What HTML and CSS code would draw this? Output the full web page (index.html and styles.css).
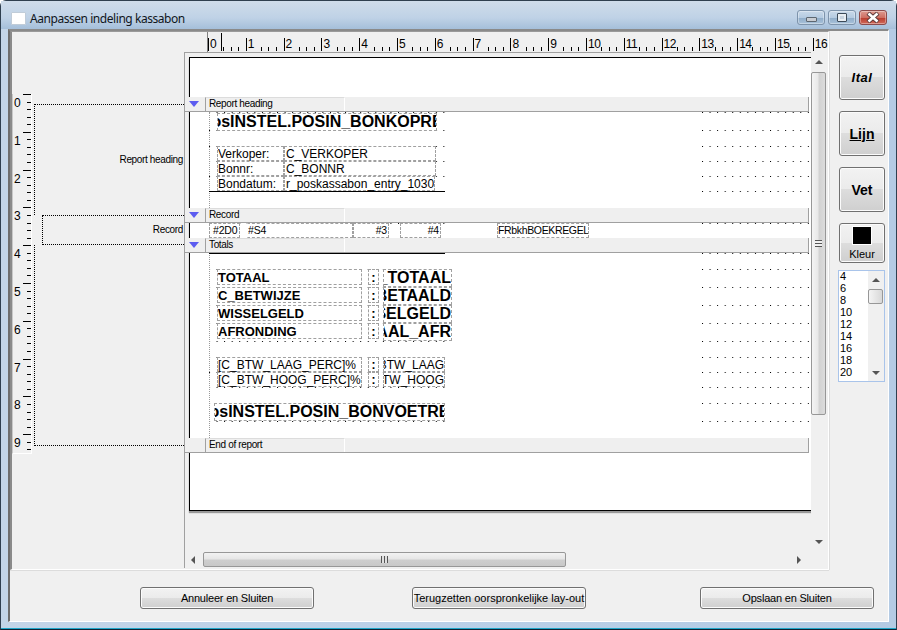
FILE: index.html
```html
<!DOCTYPE html>
<html lang="nl">
<head>
<meta charset="utf-8">
<title>Aanpassen indeling kassabon</title>
<link rel="stylesheet" href="styles.css">
</head>
<body>
<div class="window">
  <header class="titlebar">
    <span class="app-icon"></span>
    <span class="title">Aanpassen indeling kassabon</span>
    <div class="controls">
      <span class="ctl ctl-min"><i></i></span>
      <span class="ctl ctl-max"><i></i></span>
      <span class="ctl ctl-close"><svg width="16" height="11" viewBox="0 0 16 11"><path d="M3 1 L13 10 M13 1 L3 10" stroke="#5a3a3a" stroke-width="4.4"/><path d="M3.5 1.5 L12.5 9.5 M12.5 1.5 L3.5 9.5" stroke="#fff" stroke-width="2.6"/></svg></span>
    </div>
  </header>
  <div class="client">
    <div class="main">
      <section class="designer">
        <div class="left-pane">
          <div class="vruler">
            <div class="vcell"><span>0</span></div><div class="vcell"><span>1</span></div><div class="vcell"><span>2</span></div><div class="vcell"><span>3</span></div><div class="vcell"><span>4</span></div><div class="vcell"><span>5</span></div><div class="vcell"><span>6</span></div><div class="vcell"><span>7</span></div><div class="vcell"><span>8</span></div><div class="vcell"><span>9</span></div>
          </div>
          <div class="ranges">
            <div class="range range-heading">Report heading</div>
            <div class="range range-record">Record</div>
            <div class="range range-totals"></div>
          </div>
        </div>
        <div class="report-pane">
          <div class="hruler">
            <div class="hcell"><span>0</span></div><div class="hcell"><span>1</span></div><div class="hcell"><span>2</span></div><div class="hcell"><span>3</span></div><div class="hcell"><span>4</span></div><div class="hcell"><span>5</span></div><div class="hcell"><span>6</span></div><div class="hcell"><span>7</span></div><div class="hcell"><span>8</span></div><div class="hcell"><span>9</span></div><div class="hcell"><span>10</span></div><div class="hcell"><span>11</span></div><div class="hcell"><span>12</span></div><div class="hcell"><span>13</span></div><div class="hcell"><span>14</span></div><div class="hcell"><span>15</span></div><div class="hcell"><span>16</span></div>
          </div>
          <div class="view-row">
            <div class="canvas">
              <div class="page"></div>
              <svg class="dots" width="626" height="400" viewBox="0 0 626 400">
                <defs>
                  <pattern id="gridL" patternUnits="userSpaceOnUse" x="24" y="0" width="7.56" height="400"><rect width="1" height="400" fill="#000"/></pattern>
                  <pattern id="gridR" patternUnits="userSpaceOnUse" x="517" y="0" width="7.56" height="400"><rect width="1" height="400" fill="#000"/></pattern>
                </defs>
                <g fill="url(#gridR)">
                  <rect x="517" y="59" width="107" height="1"/><rect x="517" y="77" width="107" height="1"/><rect x="517" y="93" width="107" height="1"/><rect x="517" y="108" width="107" height="1"/><rect x="517" y="123" width="107" height="1"/><rect x="517" y="138" width="107" height="1"/><rect x="517" y="170" width="107" height="1"/><rect x="517" y="200" width="107" height="1"/><rect x="517" y="216" width="107" height="1"/><rect x="517" y="234" width="107" height="1"/><rect x="517" y="252" width="107" height="1"/><rect x="517" y="270" width="107" height="1"/><rect x="517" y="288" width="107" height="1"/><rect x="517" y="304" width="107" height="1"/><rect x="517" y="319" width="107" height="1"/><rect x="517" y="334" width="107" height="1"/><rect x="517" y="350" width="107" height="1"/><rect x="517" y="368" width="107" height="1"/>
                </g>
                <g fill="url(#gridL)">
                  <rect x="24" y="59" width="237" height="1"/><rect x="24" y="77" width="237" height="1"/><rect x="24" y="93" width="237" height="1"/><rect x="24" y="108" width="237" height="1"/><rect x="24" y="123" width="237" height="1"/><rect x="24" y="170" width="237" height="1"/><rect x="24" y="216" width="237" height="1"/><rect x="24" y="234" width="237" height="1"/><rect x="24" y="252" width="237" height="1"/><rect x="24" y="270" width="237" height="1"/><rect x="24" y="288" width="237" height="1"/><rect x="24" y="304" width="237" height="1"/><rect x="24" y="319" width="237" height="1"/><rect x="24" y="334" width="237" height="1"/><rect x="24" y="350" width="237" height="1"/><rect x="24" y="368" width="237" height="1"/>
                </g>
              </svg>

              <div class="band"><span class="tri"></span><span class="tab">Report heading</span></div>
              <div class="sec sec-heading">
                <div class="fld big clip f-title"><span>osINSTEL.POSIN_BONKOPRE</span></div>
                <div class="fld f-l1">Verkoper:</div><div class="fld f-v1">C_VERKOPER</div>
                <div class="fld f-l2">Bonnr:</div><div class="fld f-v2">C_BONNR</div>
                <div class="fld f-l3">Bondatum:</div><div class="fld f-v3">r_poskassabon_entry_1030</div>
                <div class="rule rule-heading"></div>
              </div>

              <div class="band"><span class="tri"></span><span class="tab">Record</span></div>
              <div class="sec sec-record">
                <div class="fld f-r1">#2D0</div>
                <div class="fld f-r2">#S4</div>
                <div class="fld f-r3 right">#3</div>
                <div class="fld f-r4 right">#4</div>
                <div class="fld f-r5">FRbkhBOEKREGEL</div>
              </div>

              <div class="band"><span class="tri"></span><span class="tab">Totals</span></div>
              <div class="sec sec-totals">
                <div class="rule rule-totals"></div>
                <div class="fld mid f-t f-y1">TOTAAL</div><div class="fld mid f-c f-y1">:</div><div class="fld big clip end f-a f-y1"><span>_TOTAAL</span></div>
                <div class="fld mid f-t f-y2">C_BETWIJZE</div><div class="fld mid f-c f-y2">:</div><div class="fld big clip end f-a f-y2"><span>BETAALD</span></div>
                <div class="fld mid f-t f-y3">WISSELGELD</div><div class="fld mid f-c f-y3">:</div><div class="fld big clip end f-a f-y3"><span>SELGELD</span></div>
                <div class="fld mid f-t f-y4">AFRONDING</div><div class="fld mid f-c f-y4">:</div><div class="fld big clip end f-a f-y4"><span>AAL_AFR</span></div>
                <div class="fld f-t f-y5">[C_BTW_LAAG_PERC]%</div><div class="fld f-c f-y5 colon">:</div><div class="fld clip end f-b f-y5"><span>BTW_LAAG</span></div>
                <div class="fld f-t f-y6">[C_BTW_HOOG_PERC]%</div><div class="fld f-c f-y6 colon">:</div><div class="fld clip end f-b f-y6"><span>TW_HOOG</span></div>
                <div class="fld big clip f-foot"><span>osINSTEL.POSIN_BONVOETRE</span></div>
              </div>

              <div class="band band-end"><span class="tri-space"></span><span class="tab">End of report</span></div>
            </div>
            <div class="vscroll">
              <i class="arrow arrow-up"></i>
              <div class="thumb-v"><b></b></div>
              <i class="arrow arrow-down"></i>
            </div>
          </div>
          <div class="hscroll">
            <i class="arrow arrow-left"></i>
            <div class="thumb-h"><b></b></div>
            <i class="arrow arrow-right"></i>
          </div>
        </div>
      </section>
      <aside class="sidebar">
        <button class="btn tool ital">Ital</button>
        <button class="btn tool lijn">Lijn</button>
        <button class="btn tool vet">Vet</button>
        <button class="btn kleur"><span class="swatch"></span><span>Kleur</span></button>
        <div class="listbox">
          <ul class="items">
            <li>4</li><li>6</li><li>8</li><li>10</li><li>12</li><li>14</li><li>16</li><li>18</li><li>20</li>
          </ul>
          <div class="list-scroll">
            <i class="arrow arrow-up"></i>
            <div class="list-thumb"></div>
            <i class="arrow arrow-down"></i>
          </div>
        </div>
      </aside>
    </div>
    <footer class="footer">
      <button class="btn action">Annuleer en Sluiten</button>
      <button class="btn action restore">Terugzetten oorspronkelijke lay-out</button>
      <button class="btn action save">Opslaan en Sluiten</button>
    </footer>
  </div>
</div>
</body>
</html>
```

FILE: styles.css
```css
* { box-sizing: border-box; }
html, body { margin: 0; padding: 0; }
body { width: 897px; height: 630px; overflow: hidden; background: #fff; font-family: "Liberation Sans", Arial, sans-serif; color: #000; }

.window { width: 897px; height: 630px; display: flex; flex-direction: column; padding: 0 7px 7px; border: 1px solid #2f3f4f; border-bottom-color: #123; border-radius: 6px 6px 0 0; background: linear-gradient(90deg, #c3d5e8 0%, #b9d0e8 50%, #b4cbe4 100%); box-shadow: inset 0 -1px 0 #1fa6c9; }

.titlebar { height: 28px; flex: none; display: flex; align-items: flex-start; margin: 0 -7px; padding: 9px 9px 0 10px; background: linear-gradient(180deg, #cfdcea 0%, #bfd2e6 60%, #a5bfda 100%), #c6d7e8; }
.app-icon { width: 15px; height: 13px; margin-top: 2px; background: #fff; border: 1px solid #c0ccd8; border-radius: 1px; }
.title { margin-left: 4px; font: 12px/17px "Noto Sans", "Open Sans", sans-serif; letter-spacing: -.45px; color: #10161c; }
.controls { margin-left: auto; display: flex; gap: 3px; }
.ctl { width: 28px; height: 15px; display: flex; align-items: center; justify-content: center; border: 1px solid #7d93ab; border-radius: 3px; background: linear-gradient(180deg, #c9d9e9 0%, #b5cbe1 50%, #8eabc8 51%, #a9c2da 100%); box-shadow: inset 0 0 0 1px rgba(255,255,255,.35); }
.ctl-min i { width: 11px; height: 5px; margin-top: 3px; background: #c8ccd2; border: 1px solid #5c6670; border-radius: 1px; }
.ctl-max i { width: 10px; height: 9px; background: #c8d4e0; border: 1px solid #3c4a58; box-shadow: inset 0 0 0 2px #e8edf2; border-radius: 1px; }
.ctl-close { width: 28px; border-color: #8c4a4a; background: linear-gradient(180deg, #dd9a90 0%, #cf6f62 50%, #b83a2c 51%, #cf6a5a 100%); }

.client { flex: 1; display: flex; flex-direction: column; margin-top: 0; background: #f0f0f0; border-top: 2px solid #8a8a8a; border-left: 2px solid #6e6e6e; border-right: 1px solid #fff; border-bottom: 1px solid #fff; height: 593px; }
.main { height: 539px; display: flex; flex: none; }
.designer { width: 819px; flex: none; display: flex; border-top: 1px solid #9a9a9a; border-left: 2px solid #8a8a8a; border-bottom: 1px solid #fff; border-right: 1px solid #fff; box-shadow: 0 1px 0 #dcdcdc, 1px 0 0 #dcdcdc; }

.left-pane { width: 172px; flex: none; display: flex; align-items: flex-start; }
.vruler { width: 20px; height: 360px; margin-top: 62px; flex: none; border-right: 1px solid #fff; border-bottom: 1px solid #fff; border-left: 1px solid #c8c8c8;
  background:
    repeating-linear-gradient(180deg, #000 0 1px, transparent 1px 37.8px) 10px 0 / 8px 100% no-repeat,
    repeating-linear-gradient(180deg, #000 0 1px, transparent 1px 7.56px) 14px 0 / 4px 100% no-repeat,
    #f0f0f0; }
.vcell { height: 37.8px; padding: 2px 0 0 1px; font-size: 12px; line-height: 14px; }
.ranges { width: 150px; margin: 72px 0 0 2px; flex: none; display: flex; flex-direction: column; font-size: 10px; letter-spacing: -.35px; }
.range { display: flex; align-items: center; justify-content: flex-end; padding: 0 1px 2px 0; border: 1px dotted #000; border-right: 0; border-bottom: 0; }
.range-heading { height: 111px; }
.range-record { height: 30px; margin-left: 8px; border-bottom: 1px dotted #000; }
.range-totals { height: 201px; border-top: 0; border-bottom: 1px dotted #000; }

.report-pane { flex: 1; min-width: 0; display: flex; flex-direction: column; }
.hruler { height: 20px; margin-left: 23px; flex: none; position: relative; display: flex; overflow: hidden; border-left: 1px solid #808080;
  background:
    repeating-linear-gradient(90deg, #000 0 1px, transparent 1px 37.8px) 0 6px / 100% 13px no-repeat,
    repeating-linear-gradient(90deg, #000 0 1px, transparent 1px 7.56px) 0 15px / 100% 4px no-repeat,
    #f0f0f0; }
.hruler::after { content: ""; position: absolute; left: 13px; top: 1px; width: 1px; height: 18px; background: #000; }
.hcell { width: 37.8px; flex: none; padding: 5px 0 0 1px; font-size: 12px; line-height: 14px; }
.hcell span { display: inline-block; min-width: 10px; height: 15px; padding-left: 1px; background: #f0f0f0; letter-spacing: -.5px; }

.view-row { height: 500px; display: flex; flex: none; }
.canvas { width: 627px; height: 500px; flex: none; position: relative; overflow: hidden; padding-top: 44px; border-top: 1px solid #a0a0a0; border-left: 1px solid #a0a0a0; background: #f0f0f0; }
.page { position: absolute; left: 4px; top: 4px; right: 0; height: 454px; background: #fff; border: 1px solid #000; border-right: 0; box-shadow: 0 2px 1px #999; }
.dots { position: absolute; left: 0; top: 0; }

.band { position: relative; width: 624px; height: 15px; display: flex; background: #efefef; border-bottom: 1px solid #a0a0a0; border-right: 1px solid #a0a0a0; font-size: 10px; letter-spacing: -.35px; line-height: 12px; }
.tri { width: 0; height: 0; margin: 4px 6px 0 4px; border-top: 6px solid #5c5cf0; border-left: 5px solid transparent; border-right: 5px solid transparent; flex: none; }
.tri-space { width: 20px; flex: none; }
.tab { width: 140px; padding-left: 3px; border-left: 1px solid #a0a0a0; border-right: 1px solid #fff; border-top: 1px solid #dcdcdc; }

.sec { position: relative; }
.sec::before { content: ""; position: absolute; left: 24px; top: 0; bottom: 0; border-left: 1px dotted #999; }
.sec-heading { height: 96px; }
.sec-record { height: 15px; }
.sec-totals { height: 185px; }

.fld { position: absolute; background: #fff; border: 1px dashed #a0a0a0; font-size: 12px; line-height: 14px; white-space: nowrap; overflow: visible; overflow-x: clip; padding-left: 0; }
.big { font-size: 16px; font-weight: bold; line-height: 16px; }
.mid { font-size: 13px; font-weight: bold; line-height: 15px; }
.clip { display: flex; justify-content: center; }
.clip span { flex: none; }
.end { justify-content: flex-end; }
.right { text-align: right; padding-right: 1px; }
.rule { position: absolute; left: 24px; width: 236px; height: 1px; background: #000; z-index: 1; }
.rule-heading { top: 79px; }
.rule-totals { top: 0; }

.f-title { left: 32px; top: 1px; width: 220px; height: 18px; }
.f-l1, .f-l2, .f-l3 { left: 32px; width: 67px; height: 15px; padding-left: 0; }
.f-v1, .f-v2, .f-v3 { left: 99px; width: 152px; height: 15px; padding-left: 1px; }
.f-l1, .f-v1 { top: 34px; }
.f-l2, .f-v2 { top: 49px; }
.f-l3, .f-v3 { top: 64px; }
.f-v3 { width: 151px; }

.f-r1, .f-r2, .f-r3, .f-r4, .f-r5 { top: 0; height: 15px; font-size: 10.5px; line-height: 13px; letter-spacing: -.2px; }
.f-r1 { left: 24px; width: 31px; padding-left: 3px; }
.f-r2 { left: 62px; width: 106px; border-left-color: transparent; }
.f-r3 { left: 168px; width: 36px; }
.f-r4 { left: 215px; width: 41px; }
.f-r5 { left: 312px; width: 92px; letter-spacing: -.35px; }

.f-t { left: 32px; width: 145px; }
.f-c { left: 183px; width: 11px; text-align: center; }
.f-b { left: 198px; width: 62px; }
.f-y1, .f-y2, .f-y3, .f-y4 { height: 16px; }
.f-y1 { top: 16px; }
.f-y2 { top: 34px; }
.f-y3 { top: 52px; }
.f-y4 { top: 70px; }
.f-y5, .f-y6 { height: 15px; }
.f-y5 { top: 104px; }
.f-y6 { top: 119px; }
.f-a { left: 198px; width: 69px; height: 18px; line-height: 15px; }
.colon { font-weight: bold; }
.f-foot { left: 29px; top: 150px; width: 231px; height: 18px; }

.vscroll { width: 17px; flex: none; display: flex; flex-direction: column; align-items: flex-start; background: #f0f0f0; padding-top: 20px; position: relative; }
.thumb-v { width: 15px; height: 343px; display: flex; align-items: center; justify-content: center; border: 1px solid #979797; border-radius: 2px; background: linear-gradient(90deg, #f4f4f4 0%, #e8e8e8 45%, #d2d2d2 55%, #dcdcdc 100%); }
.thumb-v b { width: 7px; height: 7px; background: repeating-linear-gradient(180deg, #555 0 1px, #f0f0f0 1px 3px); }
.vscroll .arrow-up { position: absolute; left: 4px; top: 8px; }
.vscroll .arrow-down { position: absolute; left: 4px; top: 488px; }

.hscroll { height: 16px; flex: none; display: flex; align-items: center; background: #f0f0f0; border-left: 1px solid #a0a0a0; }
.hscroll .arrow-left { margin-left: 6px; }
.thumb-h { width: 363px; height: 15px; margin-left: 8px; align-self: flex-start; display: flex; align-items: center; justify-content: center; border: 1px solid #979797; border-radius: 2px; background: linear-gradient(180deg, #f2f2f2 0%, #e6e6e6 45%, #cecece 55%, #c8c8c8 100%); }
.thumb-h b { width: 7px; height: 7px; background: repeating-linear-gradient(90deg, #555 0 1px, #e0e0e0 1px 3px); }
.hscroll .arrow-right { margin-left: 231px; }

.arrow { display: block; width: 0; height: 0; flex: none; }
.arrow-up { border-bottom: 4px solid #555; border-left: 4px solid transparent; border-right: 4px solid transparent; }
.arrow-down { border-top: 4px solid #555; border-left: 4px solid transparent; border-right: 4px solid transparent; }
.arrow-left { border-right: 4px solid #555; border-top: 4px solid transparent; border-bottom: 4px solid transparent; }
.arrow-right { border-left: 4px solid #555; border-top: 4px solid transparent; border-bottom: 4px solid transparent; }

.sidebar { flex: 1; display: flex; flex-direction: column; padding: 24px 0 0 10px; }
.btn { display: flex; align-items: center; justify-content: center; padding: 0; border: 1px solid #707070; border-radius: 3px; font-family: "Liberation Sans", Arial, sans-serif; color: #000; background: linear-gradient(180deg, #f2f2f2 0%, #ebebeb 49%, #dddddd 50%, #cfcfcf 100%); box-shadow: inset 0 0 0 1px #fbfbfb; }
.tool { width: 46px; height: 45px; margin-bottom: 11px; font-size: 14px; font-weight: bold; }
.ital { font-size: 13px; font-style: italic; letter-spacing: .5px; }
.lijn { text-decoration: underline; }
.kleur { width: 46px; height: 40px; flex-direction: column; justify-content: flex-start; padding-top: 3px; font-size: 11px; line-height: 14px; }
.swatch { width: 18px; height: 17px; margin-bottom: 3px; background: #000; outline: 1px solid #fff; }
.listbox { width: 47px; height: 112px; margin: 7px 0 0 -1px; display: flex; border: 1px solid #a9c4ea; background: #fff; }
.items { flex: 1; margin: -1px 0 0; padding: 0 0 0 1px; list-style: none; font-size: 11px; line-height: 12px; }
.list-scroll { width: 16px; flex: none; position: relative; background: #f0f0f0; }
.list-thumb { position: absolute; left: 0; top: 18px; width: 15px; height: 15px; border: 1px solid #979797; border-radius: 2px; background: linear-gradient(90deg, #f4f4f4, #d8d8d8); }
.list-scroll .arrow-up { position: absolute; left: 4px; top: 7px; }
.list-scroll .arrow-down { position: absolute; left: 4px; top: 100px; }

.footer { flex: 1; display: flex; align-items: flex-start; padding: 17px 14px 0 130px; }
.action { width: 174px; height: 22px; font-size: 11px; letter-spacing: -.2px; }
.restore { margin-left: 98px; white-space: nowrap; letter-spacing: 0; }
.save { margin-left: auto; }
```
